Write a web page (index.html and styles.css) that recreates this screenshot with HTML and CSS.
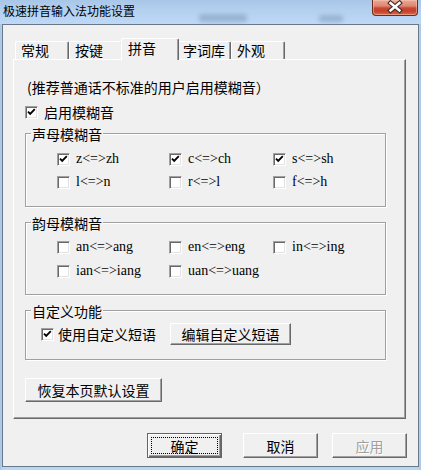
FILE: index.html
```html
<!DOCTYPE html>
<html lang="zh-CN">
<head>
<meta charset="utf-8">
<title>极速拼音输入法功能设置</title>
<link rel="stylesheet" href="styles.css">
</head>
<body>
<div class="window">
  <div class="titlebar">
    <span class="title">极速拼音输入法功能设置</span>
    <span class="blur blur-a"></span>
    <span class="blur blur-b"></span>
    <button class="close" aria-label="关闭">
      <svg width="46" height="15" viewBox="0 0 46 15">
        <path d="M18.5 3 L27.5 10.5 M27.5 3 L18.5 10.5" stroke="#3b2a2a" stroke-width="4.6" fill="none" stroke-linecap="square"/>
        <path d="M18.5 3 L27.5 10.5 M27.5 3 L18.5 10.5" stroke="#ffffff" stroke-width="2.4" fill="none" stroke-linecap="square"/>
      </svg>
    </button>
  </div>
  <div class="client">
    <div class="tabs">
      <div class="tab">常规</div>
      <div class="tab">按键</div>
      <div class="tab active">拼音</div>
      <div class="tab">字词库</div>
      <div class="tab">外观</div>
    </div>
    <div class="panel">
      <p class="hint">(推荐普通话不标准的用户启用模糊音）</p>
      <div class="check main">
        <span class="cb"><svg class="tick" viewBox="0 0 11 11"><path d="M2 4.6 L4.2 6.8 L8.8 2.2"/></svg></span>
        <span>启用模糊音</span>
      </div>

      <div class="group g1">
        <span class="group-title">声母模糊音</span>
        <div class="grid">
          <div class="check"><span class="cb"><svg class="tick" viewBox="0 0 11 11"><path d="M2 4.6 L4.2 6.8 L8.8 2.2"/></svg></span><span class="mono">z&lt;=&gt;zh</span></div>
          <div class="check"><span class="cb"><svg class="tick" viewBox="0 0 11 11"><path d="M2 4.6 L4.2 6.8 L8.8 2.2"/></svg></span><span class="mono">c&lt;=&gt;ch</span></div>
          <div class="check"><span class="cb"><svg class="tick" viewBox="0 0 11 11"><path d="M2 4.6 L4.2 6.8 L8.8 2.2"/></svg></span><span class="mono">s&lt;=&gt;sh</span></div>
          <div class="check"><span class="cb"></span><span class="mono">l&lt;=&gt;n</span></div>
          <div class="check"><span class="cb"></span><span class="mono">r&lt;=&gt;l</span></div>
          <div class="check"><span class="cb"></span><span class="mono">f&lt;=&gt;h</span></div>
        </div>
      </div>

      <div class="group g2">
        <span class="group-title">韵母模糊音</span>
        <div class="grid">
          <div class="check"><span class="cb"></span><span class="mono">an&lt;=&gt;ang</span></div>
          <div class="check"><span class="cb"></span><span class="mono">en&lt;=&gt;eng</span></div>
          <div class="check"><span class="cb"></span><span class="mono">in&lt;=&gt;ing</span></div>
          <div class="check"><span class="cb"></span><span class="mono">ian&lt;=&gt;iang</span></div>
          <div class="check"><span class="cb"></span><span class="mono">uan&lt;=&gt;uang</span></div>
        </div>
      </div>

      <div class="group g3">
        <span class="group-title">自定义功能</span>
        <div class="custom-row">
          <div class="check"><span class="cb"><svg class="tick" viewBox="0 0 11 11"><path d="M2 4.6 L4.2 6.8 L8.8 2.2"/></svg></span><span>使用自定义短语</span></div>
          <button class="btn edit">编辑自定义短语</button>
        </div>
      </div>

      <button class="btn restore">恢复本页默认设置</button>
    </div>
    <div class="actions">
      <button class="btn default">确定</button>
      <button class="btn cancel">取消</button>
      <button class="btn apply" disabled>应用</button>
    </div>
  </div>
</div>
</body>
</html>
```
FILE: styles.css
```css
* { box-sizing: border-box; }

html, body {
  margin: 0;
  padding: 0;
  width: 421px;
  height: 470px;
  overflow: hidden;
  background: #bcd5ef;
}

body {
  font-family: "Noto Sans CJK SC", "Noto Sans", sans-serif;
  font-size: 14px;
  color: #000;
}

.window {
  width: 421px;
  height: 470px;
  background: linear-gradient(to right, #a6c4e6 0, #bcd6f1 3px, #bcd6f1 418px, #a9c7e8 421px);
}

/* ---------- title bar ---------- */
.titlebar {
  position: relative;
  height: 24px;
  display: flex;
  align-items: flex-start;
  padding-left: 3px;
  background: linear-gradient(to bottom, #a8c6e8 0, #b4d0ef 10px, #bdd9f6 24px);
}

.title {
  margin-top: 4px;
  font-size: 12px;
  line-height: 14px;
  color: #000;
  flex: 1;
  white-space: nowrap;
}

.blur {
  position: absolute;
  background: #8ea9c8;
  filter: blur(2px);
  opacity: 0.75;
  border-radius: 2px;
}
.blur-a { left: 199px; top: 14px; width: 48px; height: 8px; }
.blur-b { left: 319px; top: 15px; width: 24px; height: 7px; }

.close {
  width: 46px;
  height: 16px;
  margin: 0 3px 0 0;
  padding: 0;
  border: 1px solid #6a2d22;
  border-top: none;
  border-radius: 0 0 4px 4px;
  background: linear-gradient(to bottom, #e9a896 0, #dd8772 6px, #c9492f 8px, #c4402a 11px, #d9694e 15px);
  box-shadow: inset 0 0 0 1px rgba(255, 210, 190, 0.45);
  display: block;
}
.close svg { display: block; margin: -1px 0 0 -1px; }

/* ---------- client ---------- */
.client {
  width: 417px;
  height: 443px;
  margin-left: 2px;
  border: 1px solid #6a7787;
  background: #f0f0f0;
  padding: 13px 0 0 10px;
}

/* ---------- tabs ---------- */
.tabs {
  display: flex;
  align-items: flex-end;
  height: 21px;
  margin-left: 2px;
}

.tab {
  width: 54px;
  height: 18px;
  padding-left: 5px;
  line-height: 16px;
  background: #f0f0f0;
  border-top: 1px solid #fff;
  border-left: 1px solid #fff;
  border-right: 1px solid #696969;
  border-radius: 2px 2px 0 0;
  box-shadow: inset -1px 0 #a0a0a0;
  white-space: nowrap;
}

.tab.active {
  position: relative;
  z-index: 1;
  width: 58px;
  height: 22px;
  margin: 0 -2px -1px;
  padding-left: 6px;
  line-height: 18px;
}

/* ---------- panel ---------- */
.panel {
  width: 393px;
  height: 360px;
  border: 1px solid;
  border-color: #fff #696969 #696969 #fff;
  box-shadow: inset -1px -1px #a0a0a0;
  padding-left: 11px;
}

.hint {
  margin: 19px 0 0 2px;
  line-height: 16px;
  white-space: nowrap;
}

.check {
  display: flex;
  align-items: center;
  height: 16px;
  line-height: 16px;
  white-space: nowrap;
}

.check.main { margin-top: 9px; }

.cb {
  flex: none;
  width: 13px;
  height: 13px;
  margin-right: 6px;
  background: #fff;
  border: 1px solid;
  border-color: #a0a0a0 #fff #fff #a0a0a0;
  box-shadow: inset 1px 1px #696969, inset -1px -1px #e3e3e3;
}

.tick {
  display: block;
  width: 11px;
  height: 11px;
}
.tick path {
  fill: none;
  stroke: #000;
  stroke-width: 1.9;
}

.mono {
  font-family: "Liberation Serif", "DejaVu Serif", serif;
  font-size: 14px;
}

/* ---------- group boxes ---------- */
.group {
  position: relative;
  width: 361px;
  border: 1px solid #a0a0a0;
  box-shadow: inset 1px 1px #fff, 1px 1px #fff;
}

.group-title {
  position: absolute;
  top: -8px;
  left: 5px;
  padding: 0 1px;
  line-height: 16px;
  background: #f0f0f0;
  white-space: nowrap;
}

.grid {
  display: grid;
  grid-template-columns: 112px 104px auto;
  grid-auto-rows: 16px;
}

.g1 { margin-top: 13px; padding: 17px 0 16px 31px; }
.g1 .grid { row-gap: 7px; }

.g2 { margin-top: 15px; padding: 16px 0 15px 31px; }
.g2 .grid { row-gap: 8px; }

.g3 { margin-top: 15px; padding: 12px 0 14px 15px; }

.custom-row {
  display: flex;
  align-items: center;
  height: 22px;
}
.custom-row .cb { margin-right: 4px; }

/* ---------- buttons ---------- */
.btn {
  font-family: "Noto Sans CJK SC", "Noto Sans", sans-serif;
  font-size: 14px;
  color: #000;
  background: #f0f0f0;
  border: 1px solid;
  border-color: #fff #696969 #696969 #fff;
  box-shadow: inset -1px -1px #a0a0a0;
  padding: 0;
  margin: 0;
  line-height: 16px;
  white-space: nowrap;
}

.edit {
  width: 121px;
  height: 22px;
  margin-left: 14px;
}

.restore {
  display: block;
  width: 137px;
  height: 24px;
  margin-top: 18px;
}

.actions {
  display: flex;
  justify-content: flex-end;
  margin-top: 14px;
  padding-right: 11px;
}

.actions .btn {
  width: 75px;
  height: 25px;
}

.default {
  border-color: #646464;
  box-shadow: inset 1px 1px #fff, inset -1px -1px #696969, inset -2px -2px #a0a0a0;
  outline: 1px dotted #000;
  outline-offset: -5px;
}

.cancel { margin-left: 21px; }
.apply {
  margin-left: 14px;
  color: #a0a0a0;
  text-shadow: 1px 1px #fff;
}
```
